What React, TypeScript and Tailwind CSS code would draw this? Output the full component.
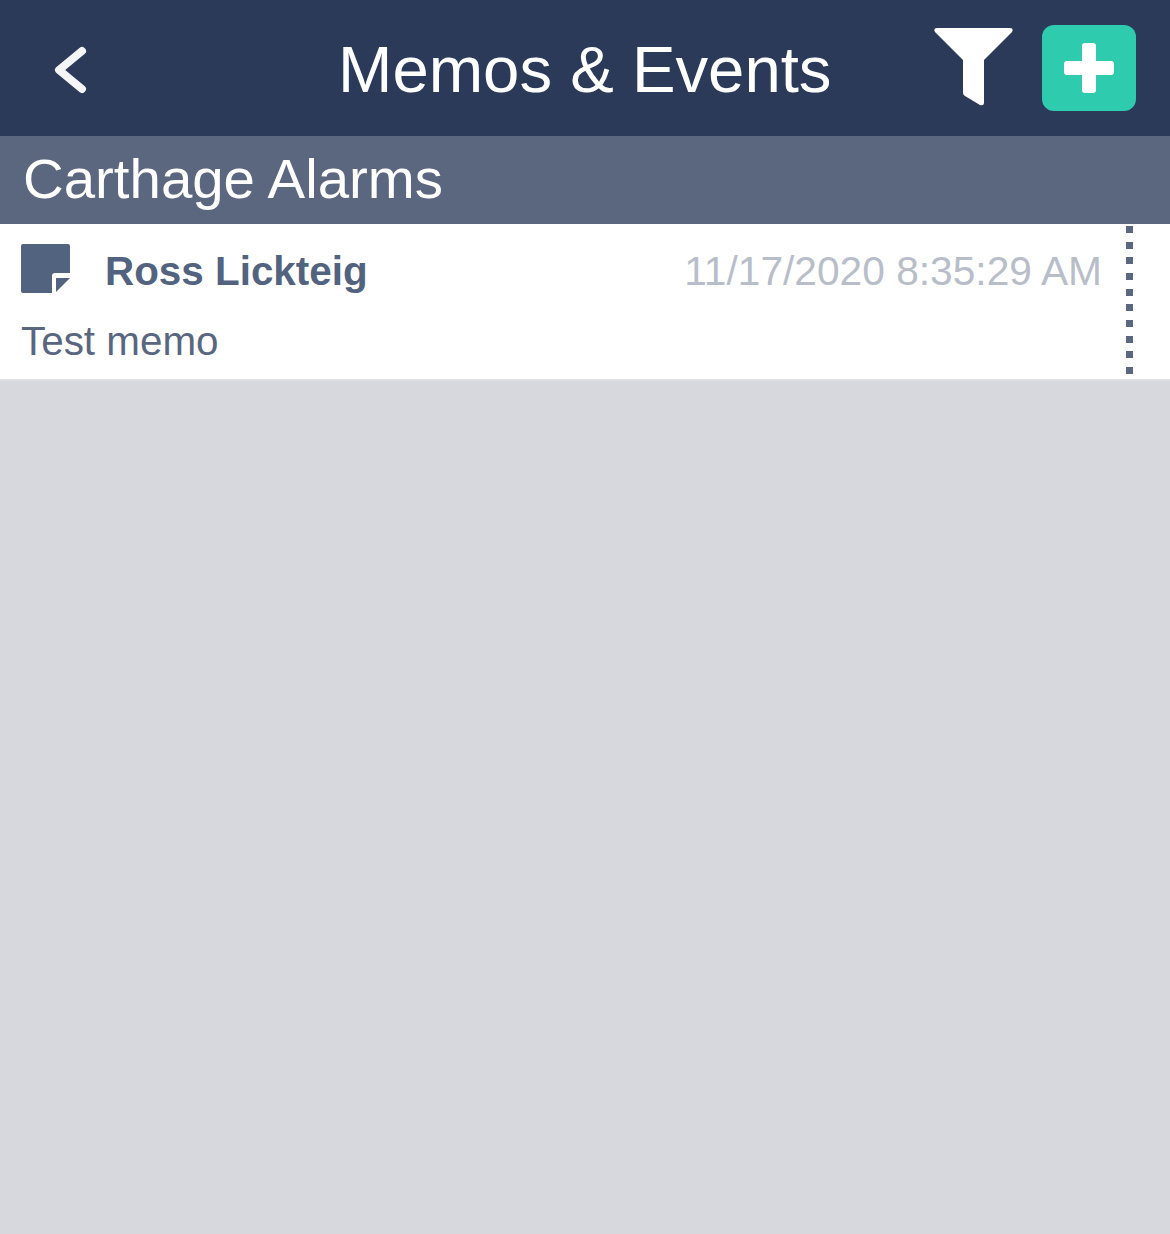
export default function App() {
  const dots = [0, 1, 2, 3, 4, 5, 6, 7, 8, 9];
  return (
    <div className="flex h-[1234px] w-[1170px] flex-col overflow-hidden bg-[#d7d8dd] font-['Liberation_Sans',Arial,sans-serif]">
      <header className="flex h-[136px] shrink-0 items-center bg-[#2b3a58] pb-[1px] pl-[50px] pr-[34px]">
        <svg className="mt-[4px] h-[48px] w-[40px] shrink-0" viewBox="0 0 40 48" fill="none">
          <path d="M32 5 L9 24 L32 43" stroke="#fff" strokeWidth="8" strokeLinecap="round" strokeLinejoin="round" opacity="0.95" />
        </svg>
        <h1 className="ml-[248px] mt-[4px] whitespace-nowrap text-[65.3px] font-normal leading-none text-white">Memos &amp; Events</h1>
        <div className="ml-auto flex items-center gap-[29px]">
          <svg className="mb-[2px] h-[80px] w-[79px] shrink-0" viewBox="0 0 79 80">
            <path d="M3 1 H76 Q80 1 78 5 L50 33 V76 Q50 79 46 78 L31 69 Q29 68 29 66 V33 L1 5 Q-1 1 3 1 Z" fill="#fff" />
          </svg>
          <button className="flex h-[86px] w-[94px] items-center justify-center rounded-[12px] bg-[#2fcbaf]">
            <svg className="h-[50px] w-[50px]" viewBox="0 0 50 50">
              <rect x="18" y="0" width="14" height="50" rx="3" fill="#fff" />
              <rect x="0" y="18" width="50" height="14" rx="3" fill="#fff" />
            </svg>
          </button>
        </div>
      </header>
      <div className="flex h-[88px] shrink-0 items-center bg-[#5b667f] pb-[2px] pl-[23px]">
        <h2 className="whitespace-nowrap text-[56.4px] font-normal leading-none text-white">Carthage Alarms</h2>
      </div>
      <div className="flex h-[157px] shrink-0 border-b-2 border-[#dfe1e6] bg-white pl-[21px] pr-[37px]">
        <div className="flex min-w-0 flex-1 flex-col pt-[20px]">
          <div className="flex h-[49px] items-center">
            <svg className="h-[49px] w-[49px] shrink-0" viewBox="0 0 49 49">
              <path d="M2 0 H47 Q49 0 49 2 V29 H34 Q31 29 31 32 V49 H2 Q0 49 0 47 V2 Q0 0 2 0 Z" fill="#526380" />
              <path d="M35 34 H49 L35 48 Z" fill="#526380" />
            </svg>
            <span className="ml-[35px] mt-[6px] whitespace-nowrap text-[40.4px] font-bold leading-none text-[#526380]">Ross Lickteig</span>
            <span className="ml-auto mr-[24px] mt-[6px] whitespace-nowrap text-[40.7px] leading-none text-[#b8bec9]">11/17/2020 8:35:29 AM</span>
          </div>
          <p className="mt-[28px] text-[40.4px] leading-none text-[#59667f]">Test memo</p>
        </div>
        <div className="flex w-[7px] shrink-0 flex-col justify-between pb-[5px] pt-[2px]">
          {dots.map((d) => (
            <span key={d} className="h-[7px] w-[7px] bg-[#5b667f]" />
          ))}
        </div>
      </div>
    </div>
  );
}
